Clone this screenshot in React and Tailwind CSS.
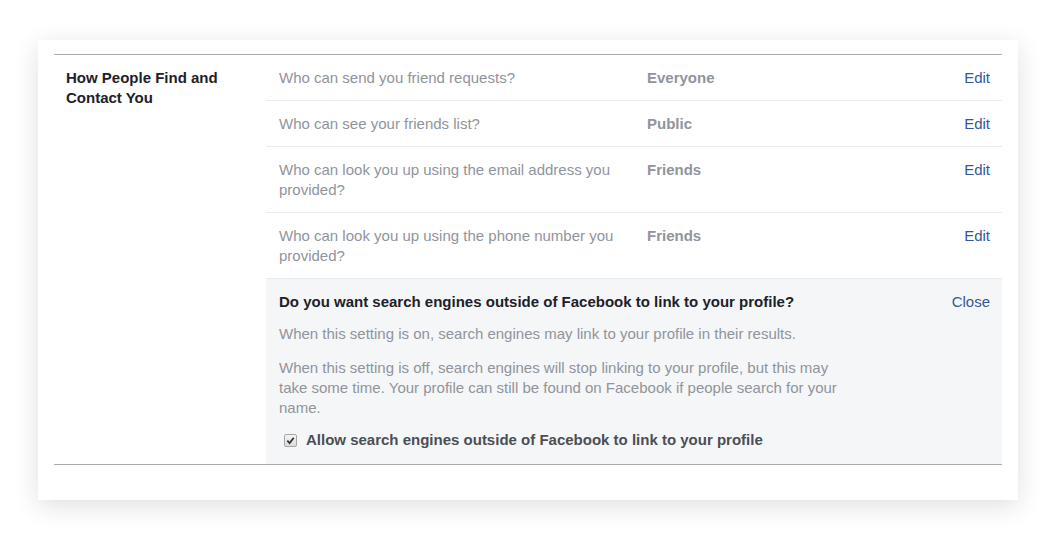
const rows = [
  { q: 'Who can send you friend requests?', v: 'Everyone' },
  { q: 'Who can see your friends list?', v: 'Public' },
  { q: 'Who can look you up using the email address you provided?', v: 'Friends' },
  { q: 'Who can look you up using the phone number you provided?', v: 'Friends' },
];

function Checkbox() {
  return (
    <span className="w-[13px] h-[13px] rounded-[2px] border border-[#a6a6a6] bg-gradient-to-b from-[#f4f4f4] to-[#dcdcdc] flex items-center justify-center shrink-0">
      <svg width="9" height="9" viewBox="0 0 10 10">
        <path d="M1.5 5.2 L4 7.8 L8.6 2" fill="none" stroke="#333" strokeWidth="2" />
      </svg>
    </span>
  );
}

export default function App() {
  return (
    <div className="min-h-screen bg-white pt-[40px] pl-[38px] pr-[39px] font-['Liberation_Sans',Arial,sans-serif] text-[15px] leading-[20px]">
      <div className="w-[980px] h-[460px] bg-white shadow-[0_6px_24px_rgba(0,0,0,0.13)] pt-[14px] px-[16px]">
        <div className="border-t border-b border-[#a9a9a9] flex">
          <div className="w-[212px] shrink-0 px-[12px] pt-[13px] font-bold text-[#1d2129]">
            How People Find and
            <br />
            Contact You
          </div>
          <div className="flex-1">
            {rows.map((r) => (
              <div key={r.q} className="flex pt-[13px] pb-[12px] px-[12px] border-b border-[#e9ebee]">
                <div className="w-[356px] pl-[1px] text-[#90949c]">{r.q}</div>
                <div className="ml-[13px] flex-1 font-bold text-[#90949c]">{r.v}</div>
                <a className="text-[#365899]">Edit</a>
              </div>
            ))}
            <div className="bg-[#f5f6f7] px-[12px] pt-[13px] pb-[14px]">
              <div className="flex pl-[1px]">
                <div className="flex-1 font-bold text-[#1d2129]">
                  Do you want search engines outside of Facebook to link to your profile?
                </div>
                <a className="text-[#365899]">Close</a>
              </div>
              <p className="mt-[12px] pl-[1px] text-[#90949c]">
                When this setting is on, search engines may link to your profile in their results.
              </p>
              <p className="mt-[14px] pl-[1px] max-w-[566px] text-[#90949c]">
                When this setting is off, search engines will stop linking to your profile, but this may take some time. Your profile can still be found on Facebook if people search for your name.
              </p>
              <label className="mt-[12px] flex items-center gap-[9px] pl-[6px] font-bold text-[#4b4f56]">
                <Checkbox />
                Allow search engines outside of Facebook to link to your profile
              </label>
            </div>
          </div>
        </div>
      </div>
    </div>
  );
}
